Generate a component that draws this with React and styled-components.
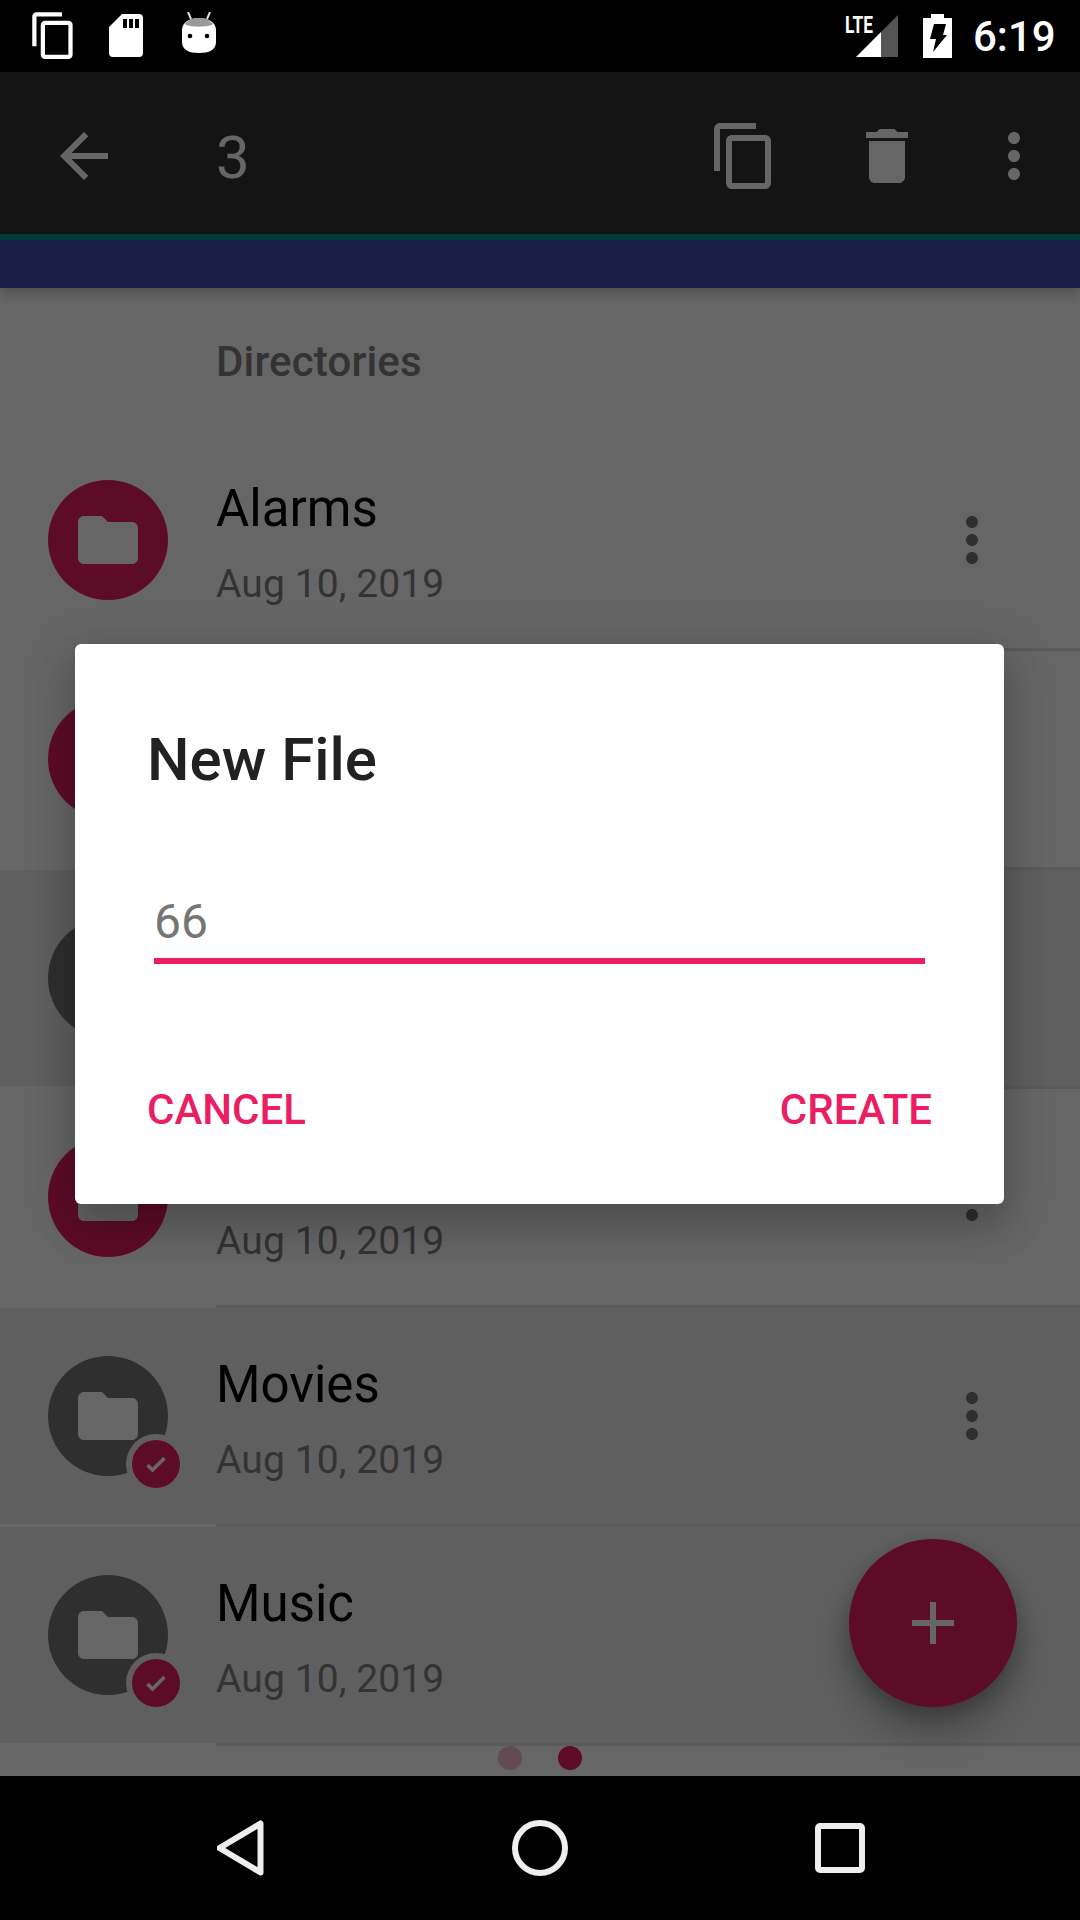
import React from "react";
import styled, { createGlobalStyle } from "styled-components";

const Global = createGlobalStyle`
  html, body { margin: 0; padding: 0; background: #000; }
  * { box-sizing: border-box; }
  body { font-family: Roboto, "Liberation Sans", sans-serif; }
`;

const PINK = "#e91e63";
const ICONS = {
  copy: "M16 1H4c-1.1 0-2 .9-2 2v14h2V3h12V1zm3 4H8c-1.1 0-2 .9-2 2v14c0 1.1.9 2 2 2h11c1.1 0 2-.9 2-2V7c0-1.1-.9-2-2-2zm0 16H8V7h11v14z",
  trash: "M6 19c0 1.1.9 2 2 2h8c1.1 0 2-.9 2-2V7H6v12zM19 4h-3.5l-1-1h-5l-1 1H5v2h14V4z",
  more: "M12 8c1.1 0 2-.9 2-2s-.9-2-2-2-2 .9-2 2 .9 2 2 2zm0 2c-1.1 0-2 .9-2 2s.9 2 2 2 2-.9 2-2-.9-2-2-2zm0 6c-1.1 0-2 .9-2 2s.9 2 2 2 2-.9 2-2-.9-2-2-2z",
  back: "M20 11H7.83l5.59-5.59L12 4l-8 8 8 8 1.41-1.41L7.83 13H20v-2z",
  folder: "M10 4H4c-1.1 0-2 .9-2 2v12c0 1.1.9 2 2 2h16c1.1 0 2-.9 2-2V8c0-1.1-.9-2-2-2h-8l-2-2z",
  plus: "M19 13h-6v6h-2v-6H5v-2h6V5h2v6h6v2z",
};

const Glyph = styled.svg`
  display: block;
  flex: none;
  width: ${(p) => p.$size}px;
  height: ${(p) => p.$size}px;
  fill: ${(p) => p.$color || "#fff"};
`;
const Icon = ({ name, size = 72, color }) => (
  <Glyph viewBox="0 0 24 24" $size={size} $color={color}>
    <path d={ICONS[name]} />
  </Glyph>
);

const Screen = styled.div`
  width: 1080px;
  height: 1920px;
  display: flex;
  flex-direction: column;
  overflow: hidden;
  background: #000;
`;

/* status bar */
const StatusBar = styled.div`
  height: 72px;
  flex: none;
  display: flex;
  align-items: flex-start;
  background: #000;
  color: #fff;
`;
const StatusSlot = styled.div`
  flex: none;
  margin-left: ${(p) => p.$left}px;
  margin-top: ${(p) => p.$top}px;
  position: relative;
`;
const StatusArt = styled.svg`
  display: block;
`;
const Lte = styled.span`
  position: absolute;
  left: -11px;
  top: 0;
  font-family: "Roboto", sans-serif;
  font-weight: 700;
  font-size: 24px;
  line-height: 20px;
  color: #fff;
  transform: scaleX(0.72);
  transform-origin: left top;
`;
const Clock = styled.div`
  margin-left: 21px;
  margin-top: 12px;
  font-size: 42px;
  line-height: 50px;
  font-weight: 500;
  color: #fff;
`;

/* main */
const Main = styled.div`
  position: relative;
  flex: 1;
  overflow: hidden;
  background: #fff;
`;
const Toolbar = styled.div`
  height: 162px;
  display: flex;
  align-items: center;
  padding: 6px 30px 0 48px;
  background: #333;
`;
const Title = styled.div`
  margin: 4px 0 0 96px;
  flex: 1;
  font-size: 60px;
  line-height: 72px;
  font-weight: 400;
  color: #fff;
`;
const Action = styled.div`
  margin-left: ${(p) => p.$gap}px;
`;
const TealLine = styled.div`
  height: 6px;
  background: #009688;
`;
const TabStrip = styled.div`
  position: relative;
  height: 48px;
  background: #3f51b5;
  box-shadow: 0 6px 12px rgba(0, 0, 0, 0.22);
`;
const SectionHead = styled.div`
  height: 144px;
  padding: 49px 0 0 216px;
  font-size: 42px;
  line-height: 50px;
  font-weight: 500;
  letter-spacing: 0.15px;
  color: #808080;
`;
const RowBody = styled.div`
  height: 216px;
  display: flex;
  align-items: center;
  padding: 0 72px 0 48px;
  background: ${(p) => (p.$selected ? "#eee" : "#fff")};
`;
const Divider = styled.div`
  height: 3px;
  margin-left: 216px;
  background: #e0e0e0;
`;
const Avatar = styled.div`
  position: relative;
  width: 120px;
  height: 120px;
  flex: none;
  border-radius: 50%;
  display: flex;
  align-items: center;
  justify-content: center;
  background: ${(p) => (p.$selected ? "#757575" : PINK)};
`;
const Badge = styled.div`
  position: absolute;
  left: 84px;
  top: 84px;
  width: 48px;
  height: 48px;
  border-radius: 50%;
  background: ${PINK};
  box-shadow: 0 0 0 6px #eee;
`;
const RowText = styled.div`
  flex: 1;
  align-self: flex-start;
  margin-left: 48px;
  padding-top: 47px;
`;
const Name = styled.div`
  font-size: 51px;
  line-height: 60px;
  height: 60px;
  color: #000;
`;
const DateText = styled.div`
  margin-top: 21px;
  font-size: 39px;
  line-height: 48px;
  letter-spacing: 0.1px;
  color: #808080;
`;
const Dots = styled.div`
  position: absolute;
  left: 0;
  right: 0;
  bottom: 6px;
  display: flex;
  justify-content: center;
  gap: 36px;
`;
const Dot = styled.div`
  width: 24px;
  height: 24px;
  border-radius: 50%;
  background: ${PINK};
  opacity: ${(p) => (p.$active ? 1 : 0.3)};
`;
const Fab = styled.div`
  position: absolute;
  right: 63px;
  bottom: 69px;
  width: 168px;
  height: 168px;
  border-radius: 50%;
  background: ${PINK};
  display: flex;
  align-items: center;
  justify-content: center;
  box-shadow: 0 24px 40px rgba(0, 0, 0, 0.28), 0 8px 20px rgba(0, 0, 0, 0.2);
`;

/* dialog */
const Scrim = styled.div`
  position: absolute;
  inset: 0;
  padding-right: 1px;
  background: rgba(0, 0, 0, 0.6);
  display: flex;
  align-items: center;
  justify-content: center;
`;
const Dialog = styled.div`
  width: 929px;
  height: 560px;
  padding-top: 80px;
  background: #fff;
  border-radius: 6px;
  box-shadow: 0 24px 38px 3px rgba(0, 0, 0, 0.14), 0 9px 46px 8px rgba(0, 0, 0, 0.12);
`;
const DialogTitle = styled.div`
  padding-left: 72px;
  font-size: 60px;
  line-height: 72px;
  font-weight: 500;
  color: #212121;
`;
const Field = styled.div`
  margin: 98px 0 0 79px;
  width: 771px;
  height: 70px;
  font-size: 48px;
  line-height: 56px;
  color: #757575;
  border-bottom: 6px solid ${PINK};
`;
const Actions = styled.div`
  margin-top: 121px;
  padding: 0 72px 0 72px;
  display: flex;
  justify-content: space-between;
`;
const TextButton = styled.div`
  font-size: 42px;
  line-height: 50px;
  font-weight: 500;
  color: ${PINK};
`;

/* nav bar */
const NavBar = styled.div`
  height: 144px;
  flex: none;
  padding-left: 90px;
  display: grid;
  grid-template-columns: repeat(3, 300px);
  align-items: center;
  justify-items: center;
  background: #000;
`;

const DATE = "Aug 10, 2019";
const rows = [
  { id: 1, name: "Alarms", date: DATE },
  { id: 2 },
  { id: 3, selected: true },
  { id: 4, date: DATE },
  { id: 5, name: "Movies", date: DATE, selected: true },
  { id: 6, name: "Music", date: DATE, selected: true },
];

export default function App() {
  return (
    <Screen>
      <Global />
      <StatusBar>
        <StatusSlot $left={28} $top={10}>
          <Icon name="copy" size={51} />
        </StatusSlot>
        <StatusSlot $left={30} $top={14}>
          <StatusArt width="34" height="43" viewBox="0 0 34 43">
            <path
              fill="#fff"
              fillRule="evenodd"
              d="M13 0H30a4 4 0 0 1 4 4V39a4 4 0 0 1-4 4H4a4 4 0 0 1-4-4V13ZM14 5v9h4V5Zm6 0v9h4V5Zm6 0v9h4V5Z"
            />
          </StatusArt>
        </StatusSlot>
        <StatusSlot $left={39} $top={12}>
          <StatusArt width="34" height="41" viewBox="0 0 34 41">
            <path d="M6 0L9 7M28 0L25 7" stroke="#ddd" strokeWidth="2" />
            <path fill="#fff" d="M0 18C0 10 8 6 17 6S34 10 34 18V30C34 38 27 41 17 41S0 38 0 30Z" />
            <path fill="#9a9a9a" d="M3 12C6 8 11 6 17 6S28 8 31 12C28 15.500 6 15.500 3 12Z" />
            <circle cx="8" cy="24" r="2.300" fill="#000" />
            <circle cx="25" cy="24" r="2.300" fill="#000" />
          </StatusArt>
        </StatusSlot>
        <StatusSlot $left={640} $top={15}>
          <Lte>LTE</Lte>
          <StatusArt width="42" height="42" viewBox="0 0 42 42">
            <path fill="#555" d="M42 0V42H25V17Z" />
            <path fill="#fff" d="M25 17V42H0Z" />
          </StatusArt>
        </StatusSlot>
        <StatusSlot $left={25} $top={14}>
          <StatusArt width="29" height="44" viewBox="0 0 29 44">
            <path
              fill="#fff"
              fillRule="evenodd"
              d="M8 0H21V4H29V44H0V4H8ZM11 10H23L20 21H24L10 38L13 25H7Z"
            />
          </StatusArt>
        </StatusSlot>
        <Clock>6:19</Clock>
      </StatusBar>

      <Main>
        <Toolbar>
          <Icon name="back" />
          <Title>3</Title>
          <Action $gap={0}>
            <Icon name="copy" />
          </Action>
          <Action $gap={71}>
            <Icon name="trash" />
          </Action>
          <Action $gap={55}>
            <Icon name="more" />
          </Action>
        </Toolbar>
        <TealLine />
        <TabStrip />
        <SectionHead>Directories</SectionHead>
        {rows.map((r) => (
          <div key={r.id}>
            <RowBody $selected={r.selected}>
              <Avatar $selected={r.selected}>
                <Icon name="folder" />
                {r.selected && (
                  <Badge>
                    <StatusArt width="48" height="48" viewBox="0 0 48 48">
                      <path d="M15.500 25L20.500 30L32.500 18" fill="none" stroke="#fff" strokeWidth="3.600" />
                    </StatusArt>
                  </Badge>
                )}
              </Avatar>
              <RowText>
                <Name>{r.name}</Name>
                {r.date && <DateText>{r.date}</DateText>}
              </RowText>
              <Icon name="more" color="#757575" />
            </RowBody>
            <Divider />
          </div>
        ))}
        <Dots>
          <Dot />
          <Dot $active />
        </Dots>
        <Fab>
          <Icon name="plus" />
        </Fab>
        <Scrim>
          <Dialog>
            <DialogTitle>New File</DialogTitle>
            <Field>66</Field>
            <Actions>
              <TextButton>CANCEL</TextButton>
              <TextButton>CREATE</TextButton>
            </Actions>
          </Dialog>
        </Scrim>
      </Main>

      <NavBar>
        <StatusArt width="47" height="56" viewBox="0 0 47 56">
          <path
            d="M43.500 3.500V52.500L2.500 28Z"
            fill="none"
            stroke="#eee"
            strokeWidth="6"
            strokeLinejoin="round"
          />
        </StatusArt>
        <StatusArt width="56" height="56" viewBox="0 0 56 56">
          <circle cx="28" cy="28" r="25" fill="none" stroke="#eee" strokeWidth="6" />
        </StatusArt>
        <StatusArt width="50" height="50" viewBox="0 0 50 50">
          <rect x="3" y="3" width="44" height="44" rx="2" fill="none" stroke="#eee" strokeWidth="6" />
        </StatusArt>
      </NavBar>
    </Screen>
  );
}
